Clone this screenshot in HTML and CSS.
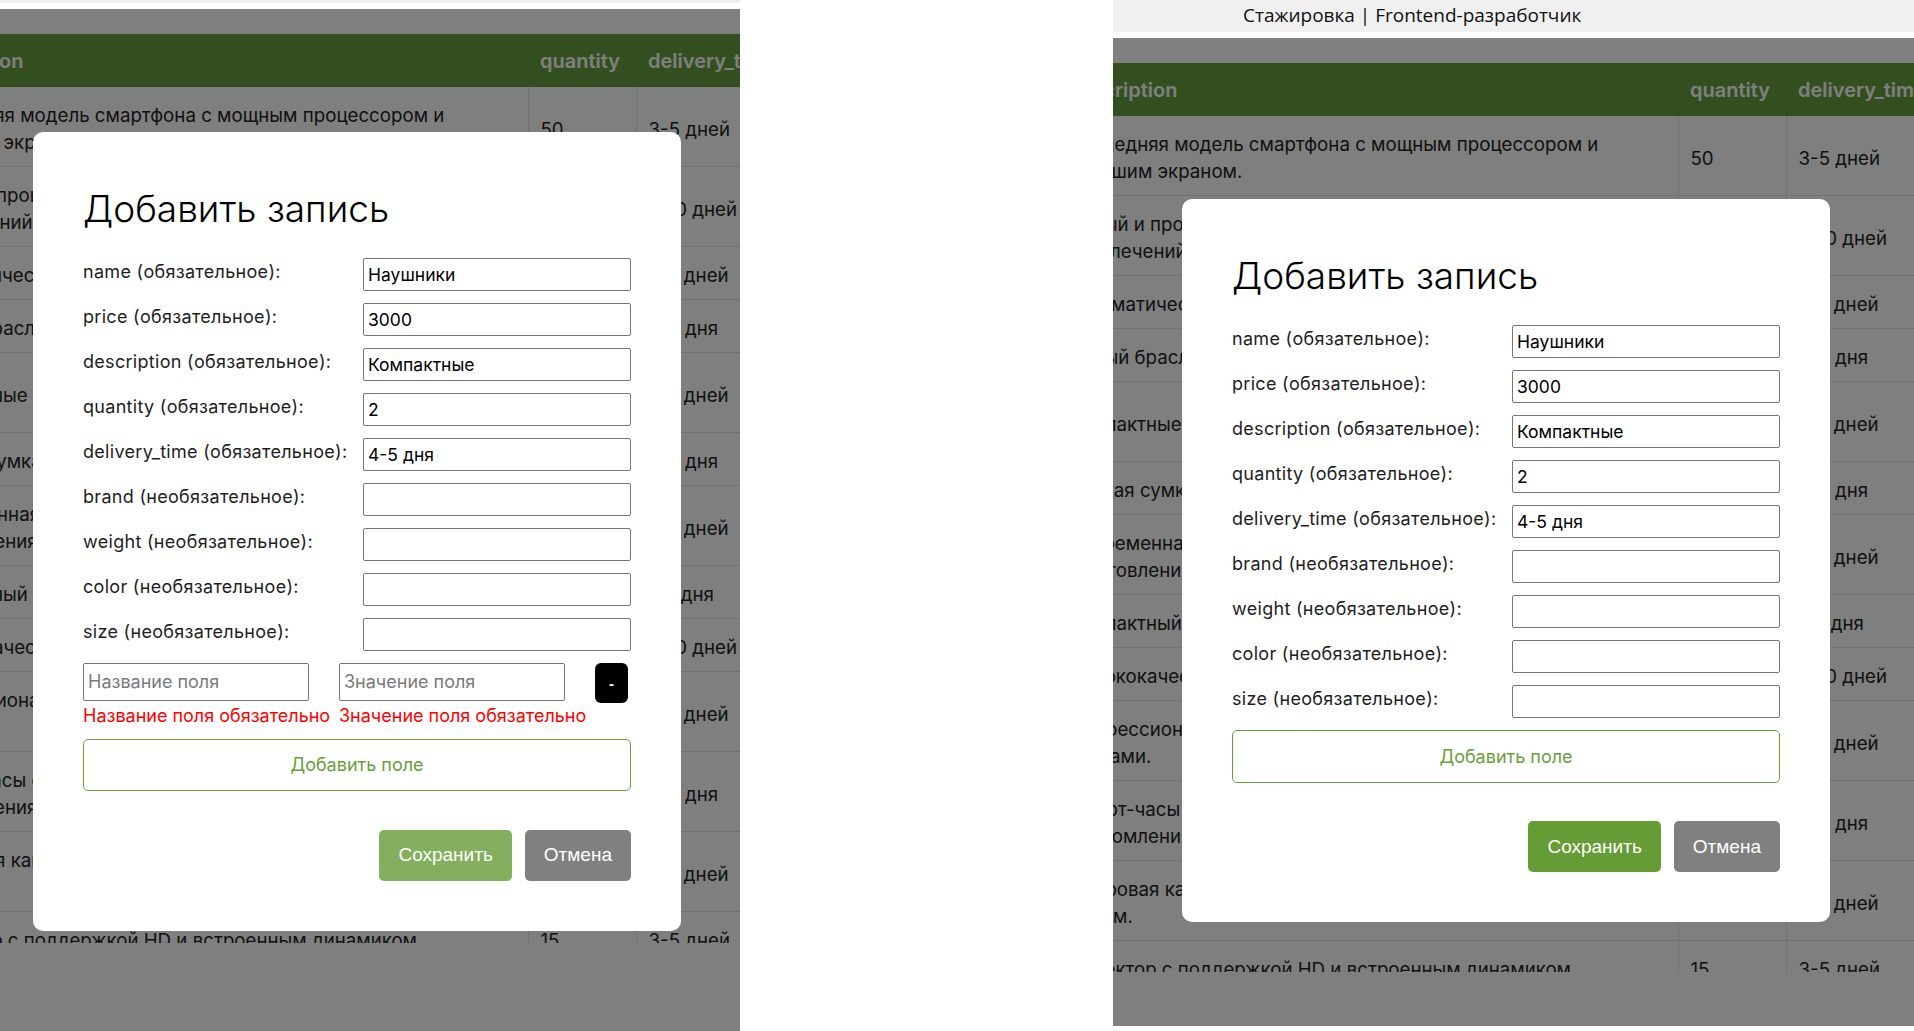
FILE: index.html
```html
<!DOCTYPE html>
<html lang="ru">
<head>
<meta charset="utf-8">
<title>Добавить запись</title>
<link rel="stylesheet" href="styles.css">
</head>
<body>
<div class="canvas">

  <section class="panel panel--left">
    <div class="titlebar titlebar--cropped"></div>
    <div class="titlebar-gap"></div>
    <div class="viewport">
      <div class="page">
        <div class="table-clip">
          <table class="table">
            <colgroup><col class="col-desc"><col class="col-qty"><col class="col-time"></colgroup>
            <thead>
              <tr><th>description</th><th>quantity</th><th>delivery_time</th></tr>
            </thead>
            <tbody>
              <tr><td>Последняя модель смартфона с мощным процессором и<br>большим экраном.</td><td>50</td><td>3-5 дней</td></tr>
              <tr><td>Новый и производительный ноутбук для работы и<br>развлечений</td><td>30</td><td>7-10 дней</td></tr>
              <tr><td>Автоматическая кофемашина для дома</td><td>20</td><td>5-7 дней</td></tr>
              <tr><td>Умный браслет для фитнеса</td><td>100</td><td>2-3 дня</td></tr>
              <tr class="row-tall"><td>Компактные беспроводные наушники</td><td>80</td><td>5-7 дней</td></tr>
              <tr><td>Мягкая сумка для ноутбука</td><td>40</td><td>2-3 дня</td></tr>
              <tr><td>Современная кофеварка с функцией капучино и<br>изготовления кофе.</td><td>25</td><td>5-7 дней</td></tr>
              <tr><td>Компактный рюкзак для города</td><td>60</td><td>1-2 дня</td></tr>
              <tr><td>Высококачественные наушники</td><td>35</td><td>7-10 дней</td></tr>
              <tr><td>Профессиональная фотокамера со сменными<br>линзами.</td><td>10</td><td>5-7 дней</td></tr>
              <tr><td>Смарт-часы с мониторингом сна и функцией<br>уведомления о звонках.</td><td>45</td><td>2-3 дня</td></tr>
              <tr><td>Цифровая камера с оптическим<br>зумом.</td><td>12</td><td>5-7 дней</td></tr>
              <tr><td>Проектор с поддержкой HD и встроенным динамиком</td><td>15</td><td>3-5 дней</td></tr>
            </tbody>
          </table>
        </div>
      </div>
      <div class="overlay"></div>
      <div class="modal">
        <h2 class="modal-title">Добавить запись</h2>
        <div class="form">
          <div class="field"><span class="field-label">name (обязательное):</span><input class="field-input" value="Наушники"></div>
          <div class="field"><span class="field-label">price (обязательное):</span><input class="field-input" value="3000"></div>
          <div class="field"><span class="field-label">description (обязательное):</span><input class="field-input" value="Компактные"></div>
          <div class="field"><span class="field-label">quantity (обязательное):</span><input class="field-input" value="2"></div>
          <div class="field"><span class="field-label">delivery_time (обязательное):</span><input class="field-input" value="4-5 дня"></div>
          <div class="field"><span class="field-label">brand (необязательное):</span><input class="field-input" value=""></div>
          <div class="field"><span class="field-label">weight (необязательное):</span><input class="field-input" value=""></div>
          <div class="field"><span class="field-label">color (необязательное):</span><input class="field-input" value=""></div>
          <div class="field"><span class="field-label">size (необязательное):</span><input class="field-input" value=""></div>
          <div class="custom">
            <div class="custom-col">
              <input class="custom-input" placeholder="Название поля">
              <span class="custom-error">Название поля обязательно</span>
            </div>
            <div class="custom-col">
              <input class="custom-input" placeholder="Значение поля">
              <span class="custom-error">Значение поля обязательно</span>
            </div>
            <button class="remove-btn" type="button">-</button>
          </div>
          <button class="add-btn" type="button">Добавить поле</button>
        </div>
        <div class="actions">
          <button class="btn btn-save" type="button" disabled>Сохранить</button>
          <button class="btn btn-cancel" type="button">Отмена</button>
        </div>
      </div>
    </div>
  </section>

  <section class="panel panel--right">
    <div class="titlebar">Стажировка | Frontend-разработчик</div>
    <div class="titlebar-gap"></div>
    <div class="viewport">
      <div class="page">
        <div class="table-clip">
          <table class="table">
            <colgroup><col class="col-desc"><col class="col-qty"><col class="col-time"></colgroup>
            <thead>
              <tr><th>description</th><th>quantity</th><th>delivery_time</th></tr>
            </thead>
            <tbody>
              <tr><td>Последняя модель смартфона с мощным процессором и<br>большим экраном.</td><td>50</td><td>3-5 дней</td></tr>
              <tr><td>Новый и производительный ноутбук для работы и<br>развлечений</td><td>30</td><td>7-10 дней</td></tr>
              <tr><td>Автоматическая кофемашина для дома</td><td>20</td><td>5-7 дней</td></tr>
              <tr><td>Умный браслет для фитнеса</td><td>100</td><td>2-3 дня</td></tr>
              <tr class="row-tall"><td>Компактные беспроводные наушники</td><td>80</td><td>5-7 дней</td></tr>
              <tr><td>Мягкая сумка для ноутбука</td><td>40</td><td>2-3 дня</td></tr>
              <tr><td>Современная кофеварка с функцией капучино и<br>изготовления кофе.</td><td>25</td><td>5-7 дней</td></tr>
              <tr><td>Компактный рюкзак для города</td><td>60</td><td>1-2 дня</td></tr>
              <tr><td>Высококачественные наушники</td><td>35</td><td>7-10 дней</td></tr>
              <tr><td>Профессиональная фотокамера со сменными<br>линзами.</td><td>10</td><td>5-7 дней</td></tr>
              <tr><td>Смарт-часы с мониторингом сна и функцией<br>уведомления о звонках.</td><td>45</td><td>2-3 дня</td></tr>
              <tr><td>Цифровая камера с оптическим<br>зумом.</td><td>12</td><td>5-7 дней</td></tr>
              <tr><td>Проектор с поддержкой HD и встроенным динамиком</td><td>15</td><td>3-5 дней</td></tr>
            </tbody>
          </table>
        </div>
      </div>
      <div class="overlay"></div>
      <div class="modal">
        <h2 class="modal-title">Добавить запись</h2>
        <div class="form">
          <div class="field"><span class="field-label">name (обязательное):</span><input class="field-input" value="Наушники"></div>
          <div class="field"><span class="field-label">price (обязательное):</span><input class="field-input" value="3000"></div>
          <div class="field"><span class="field-label">description (обязательное):</span><input class="field-input" value="Компактные"></div>
          <div class="field"><span class="field-label">quantity (обязательное):</span><input class="field-input" value="2"></div>
          <div class="field"><span class="field-label">delivery_time (обязательное):</span><input class="field-input" value="4-5 дня"></div>
          <div class="field"><span class="field-label">brand (необязательное):</span><input class="field-input" value=""></div>
          <div class="field"><span class="field-label">weight (необязательное):</span><input class="field-input" value=""></div>
          <div class="field"><span class="field-label">color (необязательное):</span><input class="field-input" value=""></div>
          <div class="field"><span class="field-label">size (необязательное):</span><input class="field-input" value=""></div>
          <button class="add-btn" type="button">Добавить поле</button>
        </div>
        <div class="actions">
          <button class="btn btn-save" type="button">Сохранить</button>
          <button class="btn btn-cancel" type="button">Отмена</button>
        </div>
      </div>
    </div>
  </section>

</div>
</body>
</html>
```

FILE: styles.css
```css
* { box-sizing: border-box; }

html, body {
  margin: 0;
  padding: 0;
  background: #ffffff;
}

body {
  width: 1914px;
  height: 1031px;
  overflow: hidden;
  font-family: Inter, "Noto Sans", sans-serif;
}

.canvas {
  display: flex;
  justify-content: space-between;
  align-items: flex-start;
  height: 1031px;
}

.panel {
  display: flex;
  flex-direction: column;
  overflow: hidden;
}

.panel--left { width: 740px; height: 1031px; }
.panel--right { width: 801px; height: 1026px; }

.titlebar {
  flex: none;
  height: 32px;
  padding-left: 130px;
  background: #f0f0f0;
  color: #111111;
  font-family: "Open Sans", "Noto Sans", sans-serif;
  font-size: 19px;
  line-height: 30px;
  white-space: nowrap;
}

.titlebar--cropped { height: 3px; }

.titlebar-gap { flex: none; height: 6px; background: #ffffff; }

.viewport {
  position: relative;
  flex: 1;
  overflow: hidden;
  background: #ffffff;
}

.page { padding-top: 25px; }

.table-clip {
  height: 909px;
  overflow: hidden;
}

.table {
  border-collapse: collapse;
  table-layout: fixed;
  font-size: 18.7px;
  line-height: 27px;
  color: #222222;
  white-space: nowrap;
}

.panel--left .table { margin-left: -98px; width: 904px; }
.panel--right .table { margin-left: -57px; width: 900px; }

.panel--left .col-desc { width: 626px; }
.panel--right .col-desc { width: 622px; }
.col-qty { width: 108px; }
.col-time { width: 170px; }

.table th {
  background: #689e3e;
  color: #ffffff;
  font-size: 20px;
  font-weight: 600;
  text-align: left;
  padding: 14px 12px 12px;
}

.table td {
  padding: 15px 12px 10px;
  border-bottom: 1px solid #e4e4e4;
  border-right: 1px solid #e4e4e4;
  vertical-align: middle;
  overflow: hidden;
}

.table .row-tall td { height: 80px; }

.overlay {
  position: absolute;
  inset: 0;
  background: rgba(0, 0, 0, 0.5);
}

.modal {
  position: absolute;
  width: 648px;
  padding: 54px 50px 50px;
  background: #ffffff;
  border-radius: 10px;
}

.panel--left .modal { left: 33px; top: 123px; }
.panel--right .modal { left: 69px; top: 161px; }

.modal-title {
  margin: 0;
  font-size: 37px;
  line-height: 45px;
  font-weight: 300;
  color: #000000;
}

.form {
  margin-top: 27px;
  display: flex;
  flex-direction: column;
  gap: 12px;
}

.field {
  display: flex;
  align-items: flex-start;
  height: 33px;
}

.field-label {
  width: 280px;
  padding-top: 3px;
  font-size: 18px;
  line-height: 21px;
  letter-spacing: 0.3px;
  color: #1e1e1e;
  white-space: nowrap;
}

.field-input,
.custom-input {
  width: 268px;
  height: 33px;
  margin: 0;
  padding: 0 4px;
  border: 1px solid #767676;
  border-radius: 2px;
  background: #ffffff;
  font-family: Inter, "Noto Sans", sans-serif;
  font-size: 17.5px;
  color: #000000;
  outline: none;
}

.custom {
  display: flex;
  align-items: flex-start;
  gap: 30px;
}

.custom-col {
  display: flex;
  flex-direction: column;
  width: 226px;
}

.custom-input {
  width: 226px;
  height: 37.5px;
  font-size: 18px;
}

.custom-input::placeholder { color: #7a7a7a; }

.custom-error {
  margin-top: 4px;
  font-size: 18px;
  line-height: 22px;
  color: #ff0000;
  white-space: nowrap;
}

.remove-btn {
  width: 33px;
  height: 40px;
  padding: 0;
  border: none;
  border-radius: 6px;
  background: #000000;
  color: #ffffff;
  font-family: "Liberation Sans", Arial, sans-serif;
  font-size: 15px;
  font-weight: 700;
}

.add-btn {
  width: 100%;
  height: 52.5px;
  border: 1px solid #6a9e3d;
  border-radius: 5px;
  background: #ffffff;
  color: #6a9e3d;
  font-family: Inter, "Noto Sans", sans-serif;
  font-size: 18px;
}

.actions {
  display: flex;
  justify-content: flex-end;
  gap: 13px;
  margin-top: 38.5px;
}

.btn {
  height: 51px;
  padding: 0 19px;
  border: none;
  border-radius: 5px;
  color: #ffffff;
  font-family: "Liberation Sans", Arial, sans-serif;
  font-size: 19px;
}

.btn-save { background: #669c36; }
.btn-save:disabled { opacity: 0.8; }
.btn-cancel { background: #808080; }
```
